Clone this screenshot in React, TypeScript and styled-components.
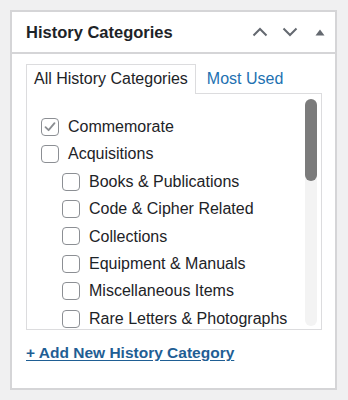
import styled, { createGlobalStyle } from "styled-components";

const GlobalStyle = createGlobalStyle`
    body {
        margin: 0;
        background: #f0f0f1;
        font-family: "Liberation Sans", Arial, sans-serif;
        color: #1d2327;
    }
`;

type Category = { name: string; checked?: boolean; children?: Category[] };

const categories: Category[] = [
    { name: "Commemorate", checked: true },
    {
        name: "Acquisitions",
        children: [
            { name: "Books & Publications" },
            { name: "Code & Cipher Related" },
            { name: "Collections" },
            { name: "Equipment & Manuals" },
            { name: "Miscellaneous Items" },
            { name: "Rare Letters & Photographs" },
        ],
    },
];

const Page = styled.div`
    padding: 10px 11px 10px 10px;
`;

const Panel = styled.div`
    box-sizing: border-box;
    height: 380px;
    background: #fff;
    border: 2px solid #d5d5d7;
`;

const Header = styled.div`
    display: flex;
    align-items: center;
    height: 40px;
    padding: 0 0 0 14px;
    border-bottom: 2px solid #d5d5d7;
`;

const Title = styled.h2`
    flex: auto;
    margin: 0;
    font-size: 16.5px;
    font-weight: bold;
    color: #1d2327;
`;

const IconButton = styled.button`
    display: flex;
    align-items: center;
    justify-content: center;
    width: 30px;
    height: 30px;
    padding: 0;
    border: none;
    background: none;
    color: #646970;
`;

const Body = styled.div`
    padding: 10px 13px 0 14px;
`;

const Tabs = styled.div`
    display: flex;
    align-items: flex-end;
    height: 29px;
`;

const Tab = styled.div<{ $active?: boolean }>`
    position: relative;
    z-index: 1;
    box-sizing: border-box;
    height: ${(p) => (p.$active ? "30px" : "29px")};
    margin-bottom: ${(p) => (p.$active ? "-1px" : "0")};
    padding: 0 ${(p) => (p.$active ? "7px" : "10px")};
    line-height: 28px;
    font-size: 16px;
    color: ${(p) => (p.$active ? "#1d2327" : "#2271b1")};
    background: ${(p) => (p.$active ? "#fff" : "transparent")};
    border: 1px solid ${(p) => (p.$active ? "#dcdcde" : "transparent")};
    border-bottom: none;
`;

const ListBox = styled.div`
    position: relative;
    box-sizing: border-box;
    height: 237px;
    overflow: hidden;
    border: 1px solid #dcdcde;
`;

const ScrollTrack = styled.div`
    position: absolute;
    top: 5px;
    bottom: 3px;
    right: 4px;
    width: 12px;
    border-radius: 6px;
    background: #f3f3f3;
`;

const ScrollThumb = styled.div`
    height: 82px;
    border-radius: 6px;
    background: #7b7b7b;
`;

const List = styled.ul<{ $nested?: boolean }>`
    margin: 0;
    padding: ${(p) => (p.$nested ? "0 0 0 21px" : "19px 0 0 14px")};
    list-style: none;
`;

const Item = styled.li`
    font-size: 16px;
    line-height: 27.4px;
    color: #1d2327;
    white-space: nowrap;
`;

const Label = styled.label`
    display: flex;
    align-items: center;
    gap: 9px;
`;

const Box = styled.span`
    box-sizing: border-box;
    display: flex;
    align-items: center;
    justify-content: center;
    flex: none;
    width: 18px;
    height: 18px;
    border: 1px solid #8c8f94;
    border-radius: 4px;
    background: #fff;
`;

const AddLink = styled.a`
    display: inline-block;
    margin-top: 14px;
    font-size: 15.5px;
    font-weight: bold;
    color: #1f5e94;
    text-decoration: underline;
    text-underline-offset: 2px;
`;

const Check = () => (
    <svg width="14" height="14" viewBox="0 0 14 14">
        <path d="M2.5 7.2 L5.6 10.2 L11.5 3.2" fill="none" stroke="#8a8d91" strokeWidth="1.8" strokeLinecap="round" strokeLinejoin="round" />
    </svg>
);

const CategoryItem = ({ cat }: { cat: Category }) => (
    <Item>
        <Label>
            <Box>{cat.checked && <Check />}</Box>
            {cat.name}
        </Label>
        {cat.children && (
            <List $nested>
                {cat.children.map((c) => (
                    <CategoryItem key={c.name} cat={c} />
                ))}
            </List>
        )}
    </Item>
);

const App = () => (
    <Page>
        <GlobalStyle />
        <Panel>
            <Header>
                <Title>History Categories</Title>
                <IconButton aria-label="Move up">
                    <svg width="16" height="10" viewBox="0 0 16 10">
                        <path d="M1.5 8.5 L8 2 L14.5 8.5" fill="none" stroke="currentColor" strokeWidth="2" />
                    </svg>
                </IconButton>
                <IconButton aria-label="Move down">
                    <svg width="16" height="10" viewBox="0 0 16 10">
                        <path d="M1.5 1.5 L8 8 L14.5 1.5" fill="none" stroke="currentColor" strokeWidth="2" />
                    </svg>
                </IconButton>
                <IconButton aria-label="Toggle panel">
                    <svg width="10" height="7" viewBox="0 0 10 7">
                        <path d="M0.5 6.5 L5 0.5 L9.5 6.5 Z" fill="currentColor" />
                    </svg>
                </IconButton>
            </Header>
            <Body>
                <Tabs>
                    <Tab $active>All History Categories</Tab>
                    <Tab>Most Used</Tab>
                </Tabs>
                <ListBox>
                    <List>
                        {categories.map((c) => (
                            <CategoryItem key={c.name} cat={c} />
                        ))}
                    </List>
                    <ScrollTrack>
                        <ScrollThumb />
                    </ScrollTrack>
                </ListBox>
                <AddLink href="#">+ Add New History Category</AddLink>
            </Body>
        </Panel>
    </Page>
);

export default App;
